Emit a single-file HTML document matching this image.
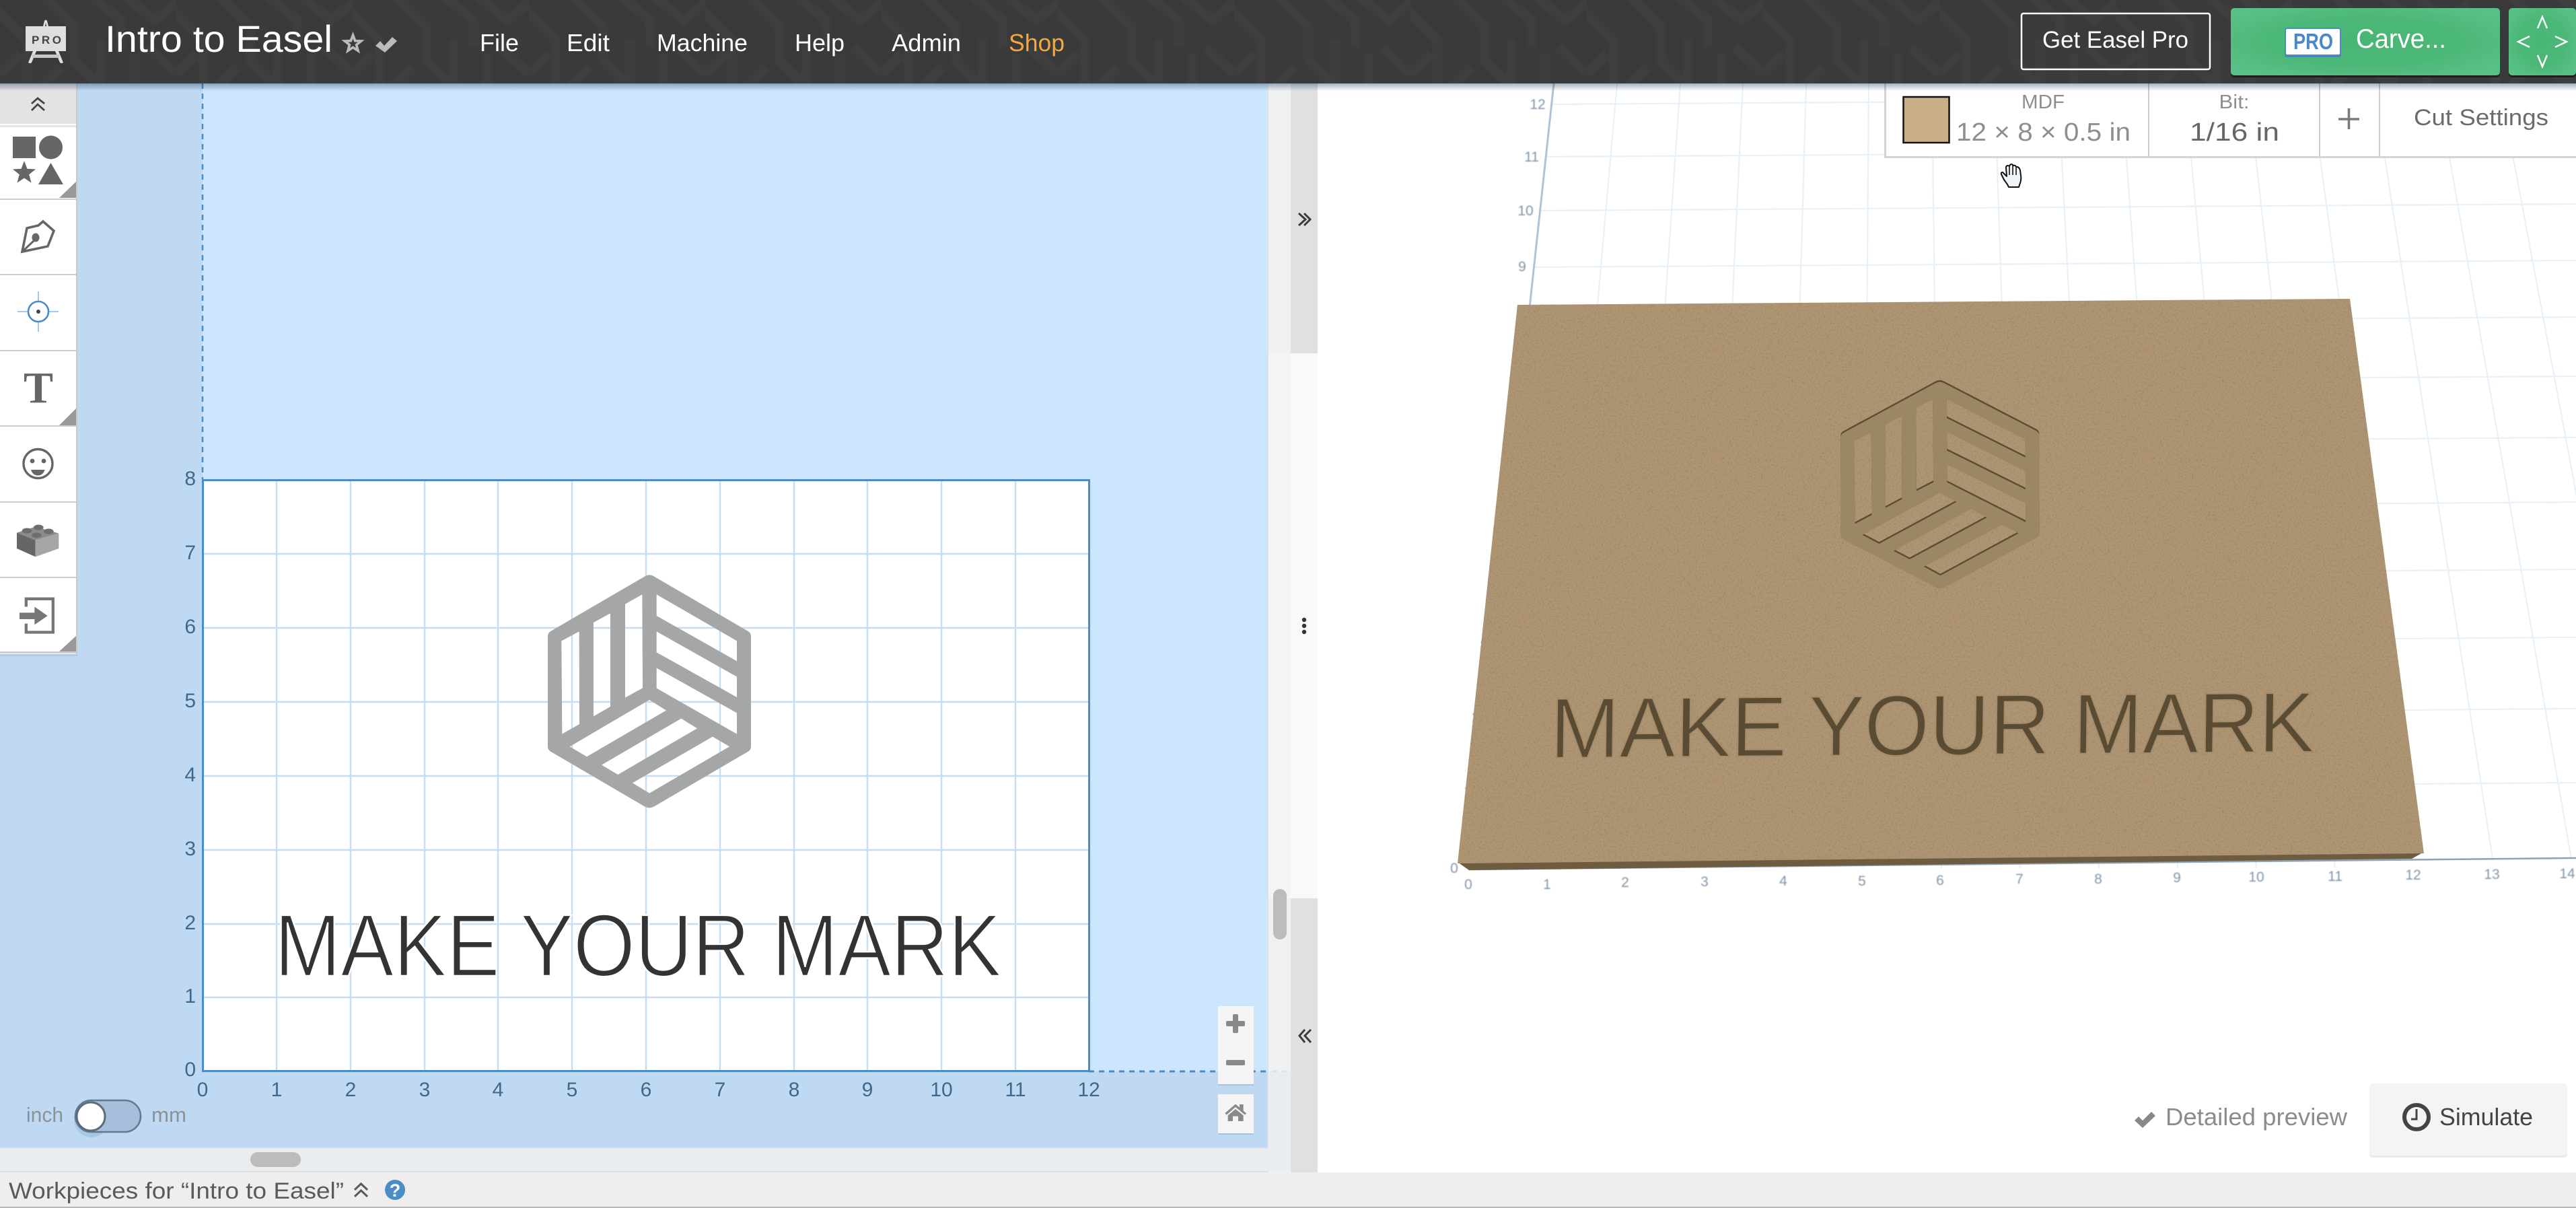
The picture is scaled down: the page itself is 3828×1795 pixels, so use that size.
<!DOCTYPE html>
<html><head><meta charset="utf-8"><title>Easel</title>
<style>
html,body{margin:0;padding:0;background:#fff;width:3828px;height:1795px;overflow:hidden}
svg{display:block}
text{font-family:"Liberation Sans",sans-serif}
</style></head><body>
<svg xmlns="http://www.w3.org/2000/svg" width="3828" height="1795" viewBox="0 0 3828 1795">
<defs>
<pattern id="hp" width="262" height="124" patternUnits="userSpaceOnUse">
<rect width="262" height="124" fill="#3a3a3a"/>
<g fill="none" stroke="#3e3e3e" stroke-width="14">
<path d="M-10 10L40 60V130M60 -10L110 40V90L150 130M130 -10L180 30V70M180 -10L230 30L280 -10M220 70L262 110M0 110L30 80"/>
<path d="M150 60V124M200 80V130M90 100L60 130"/>
</g>
</pattern>
<linearGradient id="hs" x1="0" y1="0" x2="0" y2="1"><stop offset="0" stop-color="#1e3a55" stop-opacity=".4"/><stop offset="1" stop-color="#1e3a55" stop-opacity="0"/></linearGradient>
<radialGradient id="gb" cx=".5" cy=".5" r=".6"><stop offset="0" stop-color="#48b676"/><stop offset=".6" stop-color="#4cb878"/><stop offset="1" stop-color="#58c086"/></radialGradient>
<filter id="noise" x="0" y="0" width="100%" height="100%">
<feTurbulence type="fractalNoise" baseFrequency=".4" numOctaves="2" seed="4" result="t"/>
<feColorMatrix in="t" type="matrix" values="0 0 0 0 .3  0 0 0 0 .22  0 0 0 0 .1  1.2 1.2 0 0 -1.1" result="d"/>
<feComposite in="d" in2="SourceAlpha" operator="in" result="dc"/>
<feMerge><feMergeNode in="SourceGraphic"/><feMergeNode in="dc"/></feMerge>
</filter>
<filter id="soft" x="-5%" y="-5%" width="110%" height="110%"><feGaussianBlur stdDeviation=".7"/></filter>
<path id="logo" fill-rule="evenodd" d="M795 163Q805 163 815 169L1232 412Q1248 420 1248 437V928Q1248 944 1232 952L815 1196Q795 1206 775 1196L358 952Q342 944 342 928V437Q342 420 358 412L775 169Q785 163 795 163ZM403 457L482 415L483 828L406 872ZM546 375L621 334L621 750L546 793ZM687 293L763 250L765 667L687 710ZM827 250L1185 457L1185 547L827 345ZM827 415L1185 617L1185 708L827 508ZM827 578L1185 778L1185 872L827 668ZM795 720L870 767L516 973L440 928ZM937 803L1008 847L655 1053L582 1010ZM1077 884L1152 928L795 1136L720 1090Z"/>
<polygon id="star" points="524.5,47 529,58.9 541.6,59.4 531.7,67.3 535.1,79.6 524.5,72.6 513.9,79.6 517.3,67.3 507.4,59.4 520,58.9"/>
</defs>

<!-- page -->
<rect width="3828" height="1795" fill="#fff"/>

<!-- left canvas -->
<rect x="0" y="124" width="1885" height="1583" fill="#dfe1e3"/>
<rect x="0" y="124" width="1883" height="1581" fill="#bfd9f2"/>
<rect x="301" y="124" width="1582" height="1468" fill="#cbe6fc"/>
<!-- scroll tracks -->
<rect x="0" y="1707" width="1918" height="35" fill="#e9edf0"/>
<rect x="0" y="1740" width="1958" height="2" fill="#dedede"/>
<rect x="1885" y="124" width="33" height="1618" fill="#eef0f2"/>
<rect x="1885" y="1592" width="33" height="148" fill="#e9edf0"/>
<rect x="1918" y="124" width="40" height="1618" fill="#e0e0e0"/>
<rect x="1918" y="525" width="40" height="810" fill="#f9f9f9"/>
<rect x="1885" y="525" width="33" height="810" fill="#f3f4f5"/>
<rect x="1892" y="1321" width="20" height="75" rx="10" fill="#bcbcbc"/>
<rect x="372" y="1712" width="75" height="22" rx="11" fill="#bcbcba"/>
<!-- collapse chevrons -->
<g fill="none" stroke="#3c3c3c" stroke-width="3">
<path d="M1930 317L1940 326L1930 335M1938 317L1947 326L1938 335"/>
<path d="M1939 1530L1931 1539L1939 1549M1948 1530L1939 1539L1948 1549"/>
</g>
<g fill="#333"><circle cx="1938" cy="921" r="3.2"/><circle cx="1938" cy="930" r="3.2"/><circle cx="1938" cy="939" r="3.2"/></g>

<!-- dashed guides -->
<path d="M301 124V712" stroke="#4a8cc8" stroke-width="2.5" stroke-dasharray="8 7" fill="none"/>
<path d="M1618 1592H1883" stroke="#4a8cc8" stroke-width="3" stroke-dasharray="8 7" fill="none"/>
<path d="M1890 1592H1913" stroke="#dbe3ea" stroke-width="3" stroke-dasharray="8 7" fill="none"/>

<!-- workpiece -->
<rect x="301" y="713" width="1317" height="879" fill="#fff"/>
<g stroke="#c7ddf2" stroke-width="2.4" fill="none">
<path d="M411 713V1592M521 713V1592M631 713V1592M740 713V1592M850 713V1592M960 713V1592M1070 713V1592M1180 713V1592M1289 713V1592M1399 713V1592M1509 713V1592"/>
<path d="M301 823H1618M301 933H1618M301 1043H1618M301 1153H1618M301 1263H1618M301 1373H1618M301 1482H1618"/>
</g>
<rect x="301.5" y="713.5" width="1317" height="878" fill="none" stroke="#4a8cc8" stroke-width="3"/>
<use href="#logo" transform="translate(700,800) scale(.33333)" fill="#a5a7a7"/>
<text x="408" y="1450" font-size="131" fill="#333" stroke="#fff" stroke-width="2.5" paint-order="fill stroke" textLength="1080" lengthAdjust="spacingAndGlyphs">MAKE YOUR MARK</text>
<g font-size="30" fill="#41678a">
<g text-anchor="end">
<text x="291" y="721">8</text><text x="291" y="831">7</text><text x="291" y="941">6</text><text x="291" y="1051">5</text><text x="291" y="1161">4</text><text x="291" y="1271">3</text><text x="291" y="1381">2</text><text x="291" y="1490">1</text><text x="291" y="1599">0</text>
</g>
<g text-anchor="middle">
<text x="301" y="1629">0</text><text x="411" y="1629">1</text><text x="521" y="1629">2</text><text x="631" y="1629">3</text><text x="740" y="1629">4</text><text x="850" y="1629">5</text><text x="960" y="1629">6</text><text x="1070" y="1629">7</text><text x="1180" y="1629">8</text><text x="1289" y="1629">9</text><text x="1399" y="1629">10</text><text x="1509" y="1629">11</text><text x="1618" y="1629">12</text>
</g>
</g>
<!-- unit toggle -->
<text x="39" y="1667" font-size="31" fill="#8d9296" textLength="55" lengthAdjust="spacingAndGlyphs">inch</text>
<text x="225" y="1667" font-size="31" fill="#8d9296" textLength="52" lengthAdjust="spacingAndGlyphs">mm</text>
<circle cx="136" cy="1664" r="26" fill="#7ea6cf" opacity=".35"/>
<rect x="112" y="1635" width="97" height="47" rx="23.5" fill="#a6c0dc" stroke="#607a90" stroke-width="2.5"/>
<ellipse cx="135" cy="1659" rx="21" ry="21" fill="#fff" stroke="#5c6c7c" stroke-width="3"/>

<!-- zoom controls -->
<rect x="1810" y="1495" width="53" height="118" fill="#a8c2de"/>
<rect x="1810" y="1495" width="53" height="116" fill="#f5f5f5"/>
<rect x="1810" y="1626" width="53" height="60" fill="#a8c2de"/>
<rect x="1810" y="1626" width="53" height="58" fill="#f5f5f5"/>
<g fill="#8a8a8a">
<rect x="1822" y="1517" width="28" height="8" rx="2"/><rect x="1832" y="1507" width="8" height="28" rx="2"/>
<rect x="1822" y="1575" width="28" height="8" rx="2"/>
<g transform="translate(1700,1450) scale(.33333)"><path d="M361 612L408 572L426 587V573H443V602L457 613L450 620L408 585L368 620Z"/><path d="M374 622L408 594L443 622V648H420V626H396V648H374Z"/></g>
</g>

<!-- toolbar -->
<rect x="0" y="970" width="115" height="5" fill="#9fb6cd" opacity=".5"/>
<rect x="0" y="124" width="114" height="848" fill="#fff"/>
<rect x="113" y="124" width="2" height="848" fill="#c9c9c9"/>
<rect x="0" y="124" width="113" height="60" fill="#e3e3e3"/>
<rect x="0" y="184" width="113" height="2" fill="#fff"/>
<rect x="0" y="186" width="113" height="3" fill="#d2d2d2" opacity=".6"/>
<g fill="#ccc">
<rect x="0" y="295" width="113" height="2"/><rect x="0" y="407" width="113" height="2"/><rect x="0" y="520" width="113" height="2"/><rect x="0" y="632" width="113" height="2"/><rect x="0" y="745" width="113" height="2"/><rect x="0" y="857" width="113" height="2"/><rect x="0" y="968" width="113" height="3"/>
</g>
<path d="M47 154L56 146L66 154M47 164L56 155L66 164" fill="none" stroke="#444" stroke-width="2.8"/>
<!-- shapes -->
<g fill="#666">
<rect x="19" y="203" width="34" height="32"/><circle cx="75.5" cy="219" r="17.5"/>
<use href="#star" transform="translate(-488.5,192)"/><path d="M75.5 242L94 274H57Z"/>
</g>
<g fill="#999"><path d="M113 270V294H88Z"/><path d="M113 607V632H88Z"/><path d="M113 945V968H88Z"/></g>
<!-- pen -->
<g fill="none" stroke="#666" stroke-width="3.6" stroke-linejoin="miter">
<path d="M33 374L40 339L57 335L64 329L80 343L71 366Z"/>
<path d="M33 374L50 358" stroke-width="3"/>
</g>
<ellipse cx="53" cy="353" rx="5.5" ry="6.5" fill="#666"/>
<!-- origin target -->
<path d="M26 463H87M57 433V493" stroke="#a6c8e8" stroke-width="2"/>
<circle cx="57" cy="463" r="15" fill="#fff" stroke="#4a8cc8" stroke-width="2.6"/>
<circle cx="57" cy="463" r="3" fill="#444"/>
<!-- T -->
<text x="57" y="598" font-size="66" font-weight="700" fill="#666" text-anchor="middle" style="font-family:'Liberation Serif',serif">T</text>
<!-- smile -->
<circle cx="56.5" cy="689" r="21.5" fill="none" stroke="#666" stroke-width="3.4"/>
<circle cx="48" cy="685" r="3.4" fill="#666"/><circle cx="65" cy="685" r="3.4" fill="#666"/>
<path d="M46 698H66.500Q64 706.500 56.500 706.500Q48.500 706.500 46 698Z" fill="#666"/>
<!-- lego -->
<g transform="translate(0,500) scale(.33333)">
<path d="M75 875L158 848L262 878L158 908Z" fill="#8b8b8b"/>
<path d="M75 875L158 908V982L75 945Z" fill="#666"/>
<path d="M158 908L262 878V945L158 982Z" fill="#a5a7a7"/>
<g fill="#6e6e6e"><ellipse cx="120" cy="866" rx="22" ry="12"/><ellipse cx="172" cy="851" rx="22" ry="12"/><ellipse cx="217" cy="869" rx="22" ry="12"/><ellipse cx="163" cy="886" rx="22" ry="12"/></g>
</g>
<!-- import -->
<g transform="translate(0,500) scale(.33333)" fill="#757777">
<path d="M110 1163H243V1325H110V1280H123V1312H230V1176H123V1205H110Z"/>
<path d="M87 1231H154V1205L212 1245L154 1285V1260H87Z"/>
</g>

<!-- 3D viewport grid -->
<g stroke="#e8f0f8" stroke-width="2.2" fill="none">
<path d="M2403 124L2300 1290M2497 124L2417 1290M2590 124L2534 1290M2684 124L2651 1290M2777 124L2768 1290M2871 124L2885 1290M2964 124L3002 1290M3058 124L3119 1290M3152 124L3236 1290M3246 124L3353 1290M3340 124L3470 1290M3433 124L3587 1276M3527 124L3704 1276M3621 124L3821 1276M3714 124L3930 1276M3808 124L3990 1000"/>
<path d="M2304 155L3828 145M2296 233L3828 223M2287 313L3828 303M2278 397L3828 387M2268 482L3828 471M2258 570L3828 559M2248 662L3828 650M2238 758L3828 746M2226 858L3828 846M2215 959L3828 947M2204 1066L3828 1053M2192 1176L3828 1163"/>
</g>
<path d="M2309 124L2183 1290" stroke="#b0c3d6" stroke-width="3" fill="none"/>
<path d="M2183 1292L3828 1275" stroke="#8ea3b6" stroke-width="2.5" fill="none"/>
<g font-size="21" fill="#8095a8" text-anchor="middle" filter="url(#soft)">
<text x="2285" y="162">12</text><text x="2276" y="240">11</text><text x="2267" y="320">10</text><text x="2262" y="403">9</text><text x="2258" y="489">8</text><text x="2250" y="577">7</text><text x="2238" y="669">6</text>
<text x="2228" y="765">5</text><text x="2217" y="865">4</text><text x="2205" y="966">3</text><text x="2193" y="1073">2</text><text x="2181" y="1183">1</text><text x="2161" y="1297">0</text>
<text x="2182" y="1321">0</text><text x="2299" y="1321">1</text><text x="2415" y="1318">2</text><text x="2533" y="1317">3</text><text x="2650" y="1316">4</text><text x="2767" y="1316">5</text><text x="2883" y="1315">6</text><text x="3001" y="1313">7</text><text x="3118" y="1313">8</text><text x="3235" y="1311">9</text><text x="3353" y="1310">10</text><text x="3470" y="1309">11</text><text x="3586" y="1307">12</text><text x="3703" y="1306">13</text><text x="3815" y="1305">14</text>
</g>
<!-- 3D board -->
<path d="M2166 1281L3602 1266L3584 1276L2183 1293Z" fill="#6e5c40"/>
<path d="M2255 453L3492 444L3602 1268L2166 1283Z" fill="#af9574" filter="url(#noise)"/>
<g transform="matrix(.977,-.010,.003,.887,1937.1,-180.6)">
<use href="#logo" transform="translate(700,797) scale(.33333)" fill="#5b4b33"/>
<use href="#logo" transform="translate(700,800) scale(.33333)" fill="#9c8765"/>
</g>
<text x="0" y="0" transform="matrix(1,-.008,-.012,1,2303,1126)" font-size="127" fill="#5a4b34" textLength="1136" lengthAdjust="spacingAndGlyphs" stroke="#a58c69" stroke-width="2" paint-order="fill stroke">MAKE YOUR MARK</text>

<!-- material panel -->
<rect x="2800" y="124" width="1028" height="111" fill="#d4d4d4"/>
<rect x="2803" y="124" width="1025" height="108" fill="#fff"/>
<g fill="#cbcbcb"><rect x="3192" y="124" width="2" height="108"/><rect x="3446" y="124" width="2" height="108"/><rect x="3535" y="124" width="2" height="108"/></g>
<rect x="2828.500" y="144" width="68" height="68" fill="#c9ae88" stroke="#111" stroke-width="2.5"/>
<text x="3036" y="161" font-size="29" fill="#8e8e8e" text-anchor="middle" textLength="64" lengthAdjust="spacingAndGlyphs">MDF</text>
<text x="2907" y="209" font-size="38" fill="#8e8e8e" textLength="259" lengthAdjust="spacingAndGlyphs">12 × 8 × 0.5 in</text>
<text x="3320" y="161" font-size="29" fill="#8e8e8e" text-anchor="middle" textLength="45" lengthAdjust="spacingAndGlyphs">Bit:</text>
<text x="3254" y="209" font-size="38" fill="#666" textLength="133" lengthAdjust="spacingAndGlyphs">1/16 in</text>
<path d="M3475 177H3506M3490.500 161V192" stroke="#7a7a7a" stroke-width="3.6" fill="none"/>
<text x="3587" y="186" font-size="34" fill="#6b6b6b" textLength="200" lengthAdjust="spacingAndGlyphs">Cut Settings</text>
<!-- hand cursor -->
<g transform="translate(2972,243)">
<path d="M6 24L2 16Q1 13 4 13L10 19L9 6Q9 3 12 3L14 4L15 2Q17 0 19 2L20 3Q23 2 24 5L26 5Q29 6 30 10L31 18Q32 24 30 29L28 35H13L11 31Z" fill="#eef3f6" stroke="#111" stroke-width="2" stroke-linejoin="round"/>
<path d="M14 5V17M19 3V17M24 6V17" stroke="#111" stroke-width="1.6" fill="none"/>
</g>

<!-- bottom preview buttons -->
<path d="M3172 1665L3178 1659L3184 1665L3197 1652L3203 1658L3184 1676Z" fill="#888"/>
<text x="3218" y="1672" font-size="36" fill="#8a8c8e" textLength="270" lengthAdjust="spacingAndGlyphs">Detailed preview</text>
<rect x="3521" y="1612" width="294" height="108" rx="5" fill="#e8e8e8"/>
<rect x="3521" y="1610" width="294" height="107" rx="5" fill="#f4f4f4"/>
<ellipse cx="3591" cy="1660" rx="18" ry="18" fill="none" stroke="#444" stroke-width="6"/>
<path d="M3591 1648V1663H3583" fill="none" stroke="#444" stroke-width="3"/>
<text x="3625" y="1672" font-size="36" fill="#444" textLength="139" lengthAdjust="spacingAndGlyphs">Simulate</text>

<!-- bottom bar -->
<rect x="0" y="1742" width="3828" height="51" fill="#efeeec"/>
<rect x="0" y="1793" width="3828" height="2" fill="#b8b8b8"/>
<text x="13" y="1781" font-size="34" fill="#5a5a5a" textLength="498" lengthAdjust="spacingAndGlyphs">Workpieces for “Intro to Easel”</text>
<path d="M527 1768L536.500 1759L546 1768M527 1778L536.500 1769L546 1778" fill="none" stroke="#5a5a5a" stroke-width="3"/>
<circle cx="587" cy="1768" r="15" fill="#4a8cc8"/>
<text x="587" y="1778" font-size="27" font-weight="700" fill="#fff" text-anchor="middle">?</text>

<!-- header -->
<rect x="0" y="124" width="3828" height="11" fill="url(#hs)"/>
<rect width="3828" height="124" fill="url(#hp)"/>
<!-- easel logo -->
<g fill="#dedede">
<path d="M64 39L66 31Q68 28 70 31L72 39H69L68 34L67 39Z"/>
<rect x="38" y="39" width="60" height="37"/>
<path d="M49 76H54L47 93Q45 95 42 93ZM82 76H87L94 93Q91 95 89 93Z"/>
<rect x="48" y="81" width="40" height="5" fill="#c8c8c8"/>
</g>
<text x="47" y="65" font-size="17" font-weight="700" fill="#444" textLength="44" lengthAdjust="spacing">PRO</text>
<text x="156" y="77" font-size="56" fill="#fff" textLength="338" lengthAdjust="spacingAndGlyphs">Intro to Easel</text>
<use href="#star" fill="#bbb"/>
<use href="#star" fill="#3b3b3b" transform="translate(524.5,65) scale(.42) translate(-524.5,-65)"/>
<path d="M558 68L565 61L571 68L583 55L590 61L572 78Z" fill="#bbb"/>
<g font-size="36" fill="#fff">
<text x="713" y="76" textLength="58" lengthAdjust="spacingAndGlyphs">File</text>
<text x="842" y="76" textLength="64" lengthAdjust="spacingAndGlyphs">Edit</text>
<text x="976" y="76" textLength="135" lengthAdjust="spacingAndGlyphs">Machine</text>
<text x="1181" y="76" textLength="74" lengthAdjust="spacingAndGlyphs">Help</text>
<text x="1325" y="76" textLength="103" lengthAdjust="spacingAndGlyphs">Admin</text>
<text x="1499" y="76" textLength="83" lengthAdjust="spacingAndGlyphs" fill="#f3a83f">Shop</text>
</g>
<rect x="3004" y="20" width="280" height="83" rx="3" fill="none" stroke="#fff" stroke-width="2.5"/>
<text x="3035" y="71" font-size="35" fill="#fff" textLength="217" lengthAdjust="spacingAndGlyphs">Get Easel Pro</text>
<rect x="3315" y="15" width="400" height="100" rx="5" fill="#1f1f1f"/>
<rect x="3315" y="12" width="400" height="100" rx="5" fill="url(#gb)"/>
<rect x="3395" y="44" width="84" height="41" rx="3" fill="#3f7fb6" opacity=".75"/>
<rect x="3396" y="42" width="82" height="40" rx="3" fill="#fff" stroke="#4a88c7" stroke-width="2"/>
<text x="3408" y="73" font-size="33" font-weight="700" fill="#4a88c7" textLength="59" lengthAdjust="spacingAndGlyphs">PRO</text>
<text x="3501" y="71" font-size="40" fill="#fff" textLength="134" lengthAdjust="spacingAndGlyphs">Carve...</text>
<rect x="3728" y="15" width="100" height="100" rx="5" fill="#1f1f1f"/>
<rect x="3728" y="12" width="100" height="100" rx="5" fill="url(#gb)"/>
<path d="M3771 42L3778 25L3785 42M3771 82L3778 99L3785 82M3759 54L3742 62L3759 70M3797 54L3814 62L3797 70" fill="none" stroke="#fff" stroke-width="2.4"/>
</svg>
</body></html>
